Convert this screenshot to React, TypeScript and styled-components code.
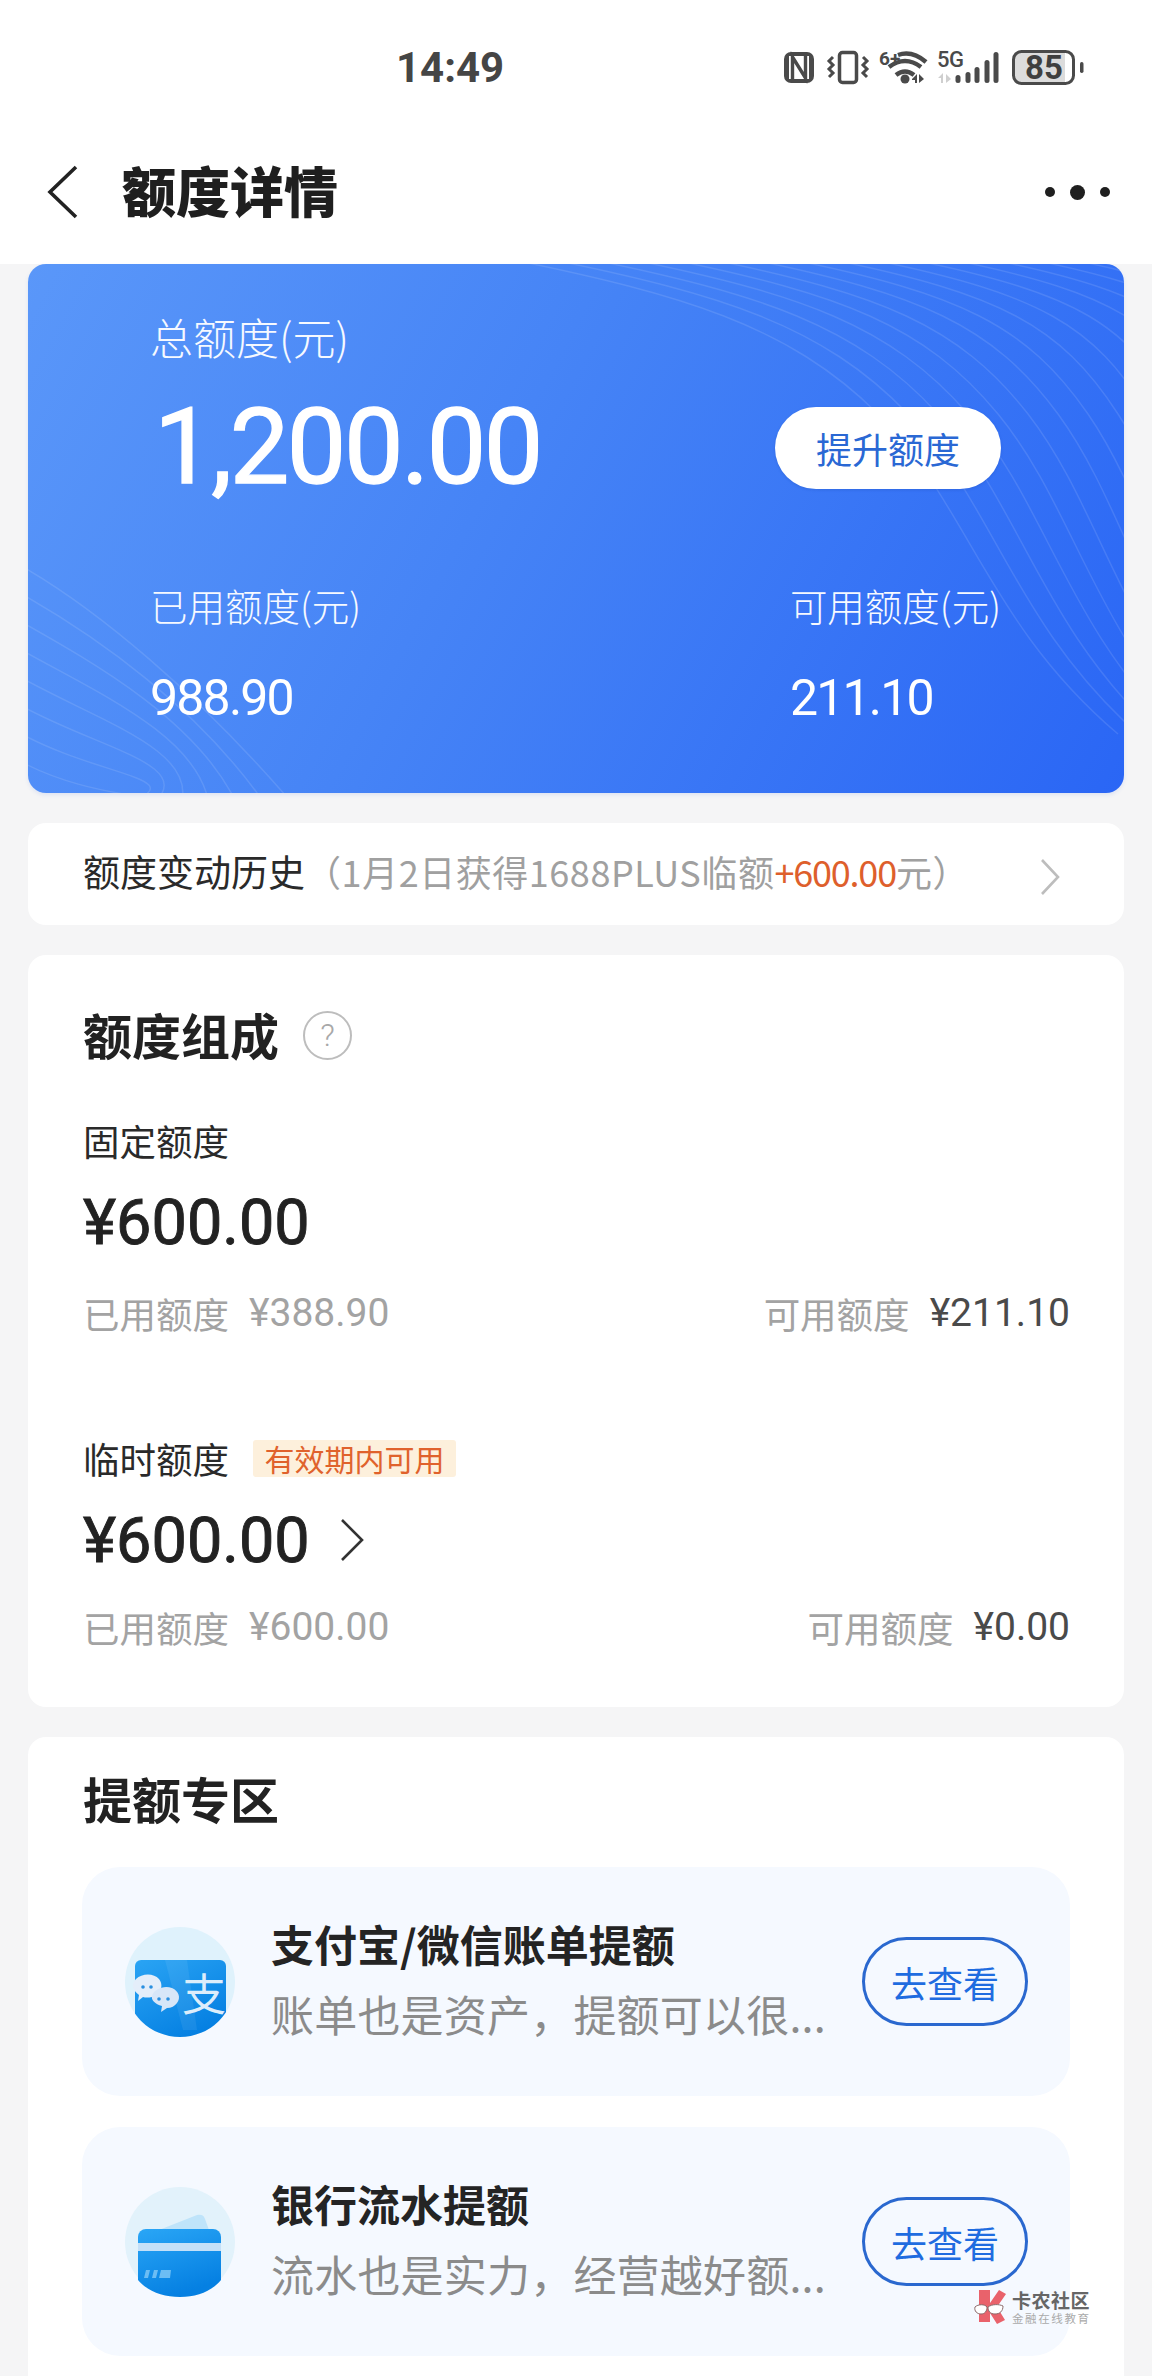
import * as React from "react";
import styled, { createGlobalStyle } from "styled-components";

const GlobalStyle = createGlobalStyle`
    html, body {
        margin: 0;
        padding: 0;
        background: #f5f5f6;
    }
    * {
        box-sizing: border-box;
    }
`;

const CJK = `"Noto Sans CJK SC", "Noto Sans", sans-serif`;
const NUM = `Roboto, "Noto Sans CJK SC", sans-serif`;

const Page = styled.div`
    position: relative;
    width: 1152px;
    height: 2376px;
    overflow: hidden;
    background: #f5f5f6;
    font-family: ${NUM};
`;

const Header = styled.header`
    background: #fff;
    height: 264px;
`;

const StatusBar = styled.div`
    display: flex;
    align-items: center;
    height: 134px;
    padding: 0 67px 0 396px;
`;

const Clock = styled.div`
    font-size: 42px;
    font-weight: 700;
    color: #454545;
`;

const StatusIcons = styled.div`
    margin-left: auto;
    display: flex;
    align-items: center;
`;

const Nav = styled.div`
    display: flex;
    align-items: center;
    height: 116px;
    padding: 0 42px 0 47px;
`;

const NavTitle = styled.h1`
    margin: 0 0 6px 43px;
    font-family: ${CJK};
    font-size: 54px;
    font-weight: 900;
    color: #1f1f1f;
`;

const Dots = styled.div`
    margin-left: auto;
    display: flex;
    align-items: center;
    gap: 15px;
`;

const Dot = styled.span<{ $size: number }>`
    width: ${(p) => p.$size}px;
    height: ${(p) => p.$size}px;
    border-radius: 50%;
    background: #1f1f1f;
`;

const Content = styled.main`
    display: flex;
    flex-direction: column;
    gap: 30px;
    padding: 0 28px;
`;

const Hero = styled.section`
    position: relative;
    height: 529px;
    padding: 44px 123px 0 122px;
    border-radius: 18px;
    overflow: hidden;
    color: #fff;
    background: linear-gradient(118deg, #5a97f9 0%, #4684f6 42%, #2a66f5 100%);
    box-shadow: 0 2px 4px rgba(60, 110, 220, 0.12);
`;

const Waves = styled.svg`
    position: absolute;
    left: 0;
    top: 0;
    pointer-events: none;
`;

const HeroInner = styled.div`
    position: relative;
`;

const HeroLabel = styled.div`
    font-family: ${CJK};
    font-size: 43px;
    line-height: 56px;
    color: #f6f9ff;
    font-weight: 300;
`;

const HeroTop = styled.div`
    display: flex;
    align-items: center;
    justify-content: space-between;
    margin-top: 23px;
    height: 120px;
`;

const HeroAmount = styled.div`
    margin-left: 4px;
    font-size: 106px;
    font-weight: 400;
    letter-spacing: -2.4px;
    line-height: 120px;
    -webkit-text-stroke: 1.4px #fff;
`;

const RaiseButton = styled.div`
    display: flex;
    align-items: center;
    justify-content: center;
    width: 226px;
    height: 82px;
    margin-top: 2px;
    border-radius: 41px;
    background: #fff;
    color: #2a68d4;
    font-family: ${CJK};
    font-size: 36px;
    box-shadow: 0 1px 3px rgba(20, 60, 150, 0.2);
`;

const HeroStats = styled.div`
    display: flex;
    justify-content: space-between;
    margin-top: 75px;
`;

const HeroStat = styled.div`
    display: flex;
    flex-direction: column;
    gap: 49px;
`;

const StatLabel = styled.div`
    font-family: ${CJK};
    font-size: 37.5px;
    line-height: 45px;
    color: #f6f9ff;
    font-weight: 300;
`;

const StatValue = styled.div`
    font-size: 50px;
    line-height: 45px;
    letter-spacing: -1.8px;
`;

const HistoryRow = styled.div`
    display: flex;
    align-items: center;
    height: 102px;
    padding: 0 64px 6px 55px;
    border-radius: 18px;
    background: #fff;
    font-family: ${CJK};
    font-size: 37px;
    color: #2a2a2a;
    white-space: nowrap;
`;

const HistoryNote = styled.span`
    color: #a0a0a0;
    font-size: 36px;
    letter-spacing: 0.55px;
`;

const Plus = styled.span`
    color: #de5f2c;
    letter-spacing: -1.2px;
`;

const Chevron = styled.svg<{ $left?: number; $top?: number }>`
    margin-left: ${(p) => (p.$left === undefined ? "auto" : `${p.$left}px`)};
    margin-top: ${(p) => p.$top ?? 0}px;
    flex: none;
`;

const Card = styled.section`
    padding: 0 54px 0 55px;
    border-radius: 18px;
    background: #fff;
`;

const QuotaCard = styled(Card)`
    height: 752px;
    padding-top: 42px;
`;

const ZoneCard = styled(Card)`
    height: 660px;
    padding-top: 24px;
`;

const CardTitle = styled.h2`
    display: flex;
    align-items: center;
    gap: 24px;
    margin: 0;
    height: 72px;
    font-family: ${CJK};
    font-size: 49px;
    font-weight: 700;
    color: #222;
`;

const HelpIcon = styled.span`
    display: flex;
    align-items: center;
    justify-content: center;
    width: 49px;
    height: 49px;
    margin-top: 4px;
    border: 2.5px solid #bdbdbd;
    border-radius: 50%;
    font-family: ${NUM};
    font-size: 32px;
    font-weight: 300;
    color: #a8a8a8;
`;

const QuotaBlock = styled.div<{ $top: number }>`
    margin-top: ${(p) => p.$top}px;
`;

const QuotaName = styled.div`
    display: flex;
    align-items: center;
    gap: 24px;
    height: 50px;
    font-family: ${CJK};
    font-size: 36.5px;
    color: #2a2a2a;
`;

const Badge = styled.span`
    display: flex;
    align-items: center;
    justify-content: center;
    width: 203px;
    height: 37px;
    background: #fdf0dc;
    color: #e0622c;
    font-size: 30px;
    border-radius: 3px;
`;

const QuotaAmount = styled.div`
    display: flex;
    align-items: center;
    height: 80px;
    margin-top: 17px;
    font-size: 63px;
    font-weight: 400;
    -webkit-text-stroke: 0.9px #222;
    color: #222;
`;

const QuotaStats = styled.div<{ $top: number }>`
    display: flex;
    justify-content: space-between;
    align-items: center;
    height: 50px;
    margin-top: ${(p) => p.$top}px;
    font-family: ${CJK};
    font-size: 36.5px;
    color: #a3a3a3;
`;

const QuotaStat = styled.div`
    display: flex;
    align-items: center;
    gap: 20px;
`;

const StatMoney = styled.span<{ $dark?: boolean }>`
    font-family: ${NUM};
    font-size: 39px;
    line-height: 50px;
    color: ${(p) => (p.$dark ? "#4a4a4a" : "#a3a3a3")};
`;

const Tiles = styled.div`
    display: flex;
    flex-direction: column;
    gap: 31px;
    margin-top: 34px;
    margin-left: -1px;
`;

const Tile = styled.div`
    display: flex;
    align-items: center;
    height: 229px;
    padding: 0 42px 0 43px;
    border-radius: 38px;
    background: #f5f9ff;
`;

const TileText = styled.div`
    flex: 1;
    min-width: 0;
    margin: 0 0 8px 36px;
    font-family: ${CJK};
`;

const TileTitle = styled.div`
    font-size: 43px;
    line-height: 60px;
    font-weight: 700;
    color: #242424;
`;

const TileSub = styled.div`
    margin-top: 10px;
    font-size: 43px;
    line-height: 60px;
    letter-spacing: 0.2px;
    color: #8b8b8b;
    white-space: nowrap;
`;

const LookButton = styled.div`
    flex: none;
    display: flex;
    align-items: center;
    justify-content: center;
    width: 166px;
    height: 89px;
    border: 3px solid #2a68cf;
    border-radius: 45px;
    color: #1f6ce0;
    font-family: ${CJK};
    font-size: 36px;
`;

const Watermark = styled.div`
    position: absolute;
    left: 973px;
    top: 2289px;
    display: flex;
    align-items: center;
    gap: 5px;
`;

const MarkText = styled.div`
    font-family: ${CJK};
`;

const MarkName = styled.div`
    font-size: 19px;
    line-height: 22px;
    font-weight: 700;
    letter-spacing: 0.5px;
    color: #666;
`;

const MarkSlogan = styled.div`
    font-size: 11.5px;
    line-height: 14px;
    letter-spacing: 1.6px;
    color: #aaa;
`;

const StatusCluster = () => (
    <svg width="302" height="40" viewBox="0 0 302 40">
        <rect x="1" y="5" width="30" height="31" rx="7" fill="#4a4a4a" />
        <path d="M6 9h20v23H6z" fill="#fff" />
        <path d="M9.5 32V10L22.5 31V9" fill="none" stroke="#4a4a4a" strokeWidth="3.4" />
        <g fill="none" stroke="#4a4a4a">
            <rect x="56.5" y="5.5" width="17" height="30" rx="3" strokeWidth="3.5" />
            <path d="M50 10l-4 4 4 4-4 4 4 4-4 4M80 10l4 4-4 4 4 4-4 4 4 4" strokeWidth="3" />
            <path d="M115 8Q129 3 143 15" strokeWidth="4.5" />
            <path d="M106 20Q122 8 138 20" strokeWidth="4.5" />
            <path d="M113 28Q122 21 131 28" strokeWidth="4.5" />
        </g>
        <text x="96" y="18" fontSize="19" fontWeight="700" fill="#4a4a4a" fontFamily="Roboto">
            6+
        </text>
        <circle cx="122" cy="32" r="4.5" fill="#4a4a4a" />
        <path d="M129 32l5-5v9h-2v-3h-3zM136 27l5 5-5 4z" fill="#4a4a4a" />
        <text x="154" y="20" fontSize="22" fontWeight="500" fill="#4a4a4a" fontFamily="Roboto" letterSpacing="-0.5">
            5G
        </text>
        <path d="M160 26l-5 5h3v5h2zM163 27l5 5-5 4z" fill="#cfcfcf" />
        <g fill="#4a4a4a">
            <rect x="172.5" y="28" width="5" height="8" rx="2.5" />
            <rect x="182.5" y="25" width="5" height="11" rx="2.5" />
            <rect x="191.5" y="20" width="5" height="16" rx="2.5" />
            <rect x="201.5" y="13" width="5" height="23" rx="2.5" />
            <rect x="210.5" y="5" width="5" height="31" rx="2.5" />
        </g>
        <path d="M232 6h50v29h-50z" fill="#dcdcdc" />
        <rect x="230.5" y="4.5" width="60" height="32" rx="8" fill="none" stroke="#4a4a4a" strokeWidth="3" />
        <rect x="297" y="15" width="3.5" height="11" rx="1.7" fill="#4a4a4a" />
        <text x="261" y="32" textAnchor="middle" fontSize="33" fontWeight="700" fill="#3f3f3f" fontFamily="Roboto">
            85
        </text>
    </svg>
);

const HeroWaves = () => (
    <Waves width="1096" height="529" viewBox="0 0 1096 529" fill="none">
        <g stroke="#fff" strokeOpacity="0.11" strokeWidth="1.5">
            {Array.from({ length: 15 }, (_, i) => (
                <path
                    key={i}
                    d={`M${486 + i * 40} -4 C${650 + i * 40} 30 ${760 + i * 34} 60 ${850 + i * 30} 150 S${960 + i * 26} 360 ${1090 + i * 20} 470`}
                />
            ))}
            {Array.from({ length: 9 }, (_, i) => (
                <path
                    key={i}
                    d={`M-10 ${300 + i * 28} C70 ${345 + i * 28} 170 ${430 + i * 14} ${265 - i * 28} 540`}
                />
            ))}
        </g>
    </Waves>
);

const ChevronIcon = ({
    left,
    top,
    color,
    w,
    h,
}: {
    left?: number;
    top?: number;
    color: string;
    w: number;
    h: number;
}) => (
    <Chevron $left={left} $top={top} width={w} height={h} viewBox={`0 0 ${w} ${h}`} fill="none">
        <path d={`M2 1L${w - 2} ${h / 2}L2 ${h - 1}`} stroke={color} strokeWidth="2.6" />
    </Chevron>
);

const WalletIcon = () => (
    <svg width="110" height="110" viewBox="0 0 110 110" style={{ flex: "none" }}>
        <defs>
            <linearGradient id="walletFill" x1="0" y1="0" x2="0.6" y2="1">
                <stop offset="0" stopColor="#2aa4f4" />
                <stop offset="1" stopColor="#0580e2" />
            </linearGradient>
            <clipPath id="walletClip">
                <circle cx="55" cy="55" r="55" />
            </clipPath>
        </defs>
        <circle cx="55" cy="55" r="55" fill="#dff2fc" />
        <g clipPath="url(#walletClip)">
            <path d="M10 39a6 6 0 0 1 6-6h79a6 6 0 0 1 6 6v71H10z" fill="url(#walletFill)" />
            <path d="M40 33h22l10 70H58z" fill="#fff" fillOpacity="0.07" />
        </g>
        <path d="M11 52c6-6 18-6 23 0 4 5 3 12-3 16-4 3-10 3-13 2l-5 4 1-6C7 63 6 57 11 52z" fill="#e4eefa" />
        <path d="M27 69c2-7 12-11 20-8 7 3 9 10 5 15-2 3-6 5-10 5l-6 4 1-6c-7-2-11-6-10-10z" fill="#d7e6f8" />
        <g fill="#2a8fe0">
            <circle cx="18" cy="60" r="1.8" />
            <circle cx="26" cy="60" r="1.8" />
            <circle cx="34" cy="72" r="1.8" />
            <circle cx="43" cy="72" r="1.8" />
        </g>
        <text x="79" y="84" textAnchor="middle" fontSize="44" fill="#dcedfb" fontFamily={CJK}>
            支
        </text>
    </svg>
);

const BankIcon = () => (
    <svg width="110" height="110" viewBox="0 0 110 110" style={{ flex: "none" }}>
        <defs>
            <linearGradient id="bankFill" x1="0" y1="0" x2="0.4" y2="1">
                <stop offset="0" stopColor="#2aa6f6" />
                <stop offset="1" stopColor="#0580e2" />
            </linearGradient>
        </defs>
        <circle cx="55" cy="55" r="55" fill="#e2f2fb" />
        <path d="M34 43L72 28c4-1 7 0 8 4l4 11z" fill="#bfe4fa" />
        <path
            d="M13 50a8 8 0 0 1 8-8h67a8 8 0 0 1 8 8v43c-9 11-24 17-41 17s-33-6-42-17z"
            fill="url(#bankFill)"
        />
        <rect x="13" y="56" width="83" height="8" fill="#c4e0f8" />
        <path d="M21 83h4l-2 8h-4zM29 83h4l-2 8h-4zM36 83h10l-1 8H34z" fill="#6cbdf4" />
    </svg>
);

const MarkLogo = () => (
    <svg width="34" height="36" viewBox="0 0 34 36">
        <path d="M6 1h11v13L26 1l7 4-9 13 8 13-8 4-7-11v9H6z" fill="#e9626b" />
        <path
            d="M2 18c3-3 10-3 12 0 0 4-2 7-6 7s-7-3-6-7zM15 18c4-3 11-3 15-1 0 5-3 8-8 8s-7-3-7-7z"
            fill="#fff"
            stroke="#8a6a6a"
            strokeWidth="1"
        />
    </svg>
);

type TileProps = {
    icon: React.ReactNode;
    title: string;
    sub: string;
};

const ZoneTile = ({ icon, title, sub }: TileProps) => (
    <Tile>
        {icon}
        <TileText>
            <TileTitle>{title}</TileTitle>
            <TileSub>{sub}</TileSub>
        </TileText>
        <LookButton>去查看</LookButton>
    </Tile>
);

export default function App() {
    return (
        <Page>
            <GlobalStyle />
            <Header>
                <StatusBar>
                    <Clock>14:49</Clock>
                    <StatusIcons>
                        <StatusCluster />
                    </StatusIcons>
                </StatusBar>
                <Nav>
                    <svg width="32" height="54" viewBox="0 0 32 54" fill="none">
                        <path d="M29 2L3 27L29 52" stroke="#222" strokeWidth="3.6" />
                    </svg>
                    <NavTitle>额度详情</NavTitle>
                    <Dots>
                        <Dot $size={10} />
                        <Dot $size={15} />
                        <Dot $size={10} />
                    </Dots>
                </Nav>
            </Header>
            <Content>
                <Hero>
                    <HeroWaves />
                    <HeroInner>
                        <HeroLabel>总额度(元)</HeroLabel>
                        <HeroTop>
                            <HeroAmount>1,200.00</HeroAmount>
                            <RaiseButton>提升额度</RaiseButton>
                        </HeroTop>
                        <HeroStats>
                            <HeroStat>
                                <StatLabel>已用额度(元)</StatLabel>
                                <StatValue>988.90</StatValue>
                            </HeroStat>
                            <HeroStat>
                                <StatLabel>可用额度(元)</StatLabel>
                                <StatValue>211.10</StatValue>
                            </HeroStat>
                        </HeroStats>
                    </HeroInner>
                </Hero>
                <HistoryRow>
                    额度变动历史
                    <HistoryNote>
                        （1月2日获得1688PLUS临额<Plus>+600.00</Plus>元）
                    </HistoryNote>
                    <ChevronIcon top={12} color="#bdbdbd" w={20} h={36} />
                </HistoryRow>
                <QuotaCard>
                    <CardTitle>
                        额度组成
                        <HelpIcon>?</HelpIcon>
                    </CardTitle>
                    <QuotaBlock $top={46}>
                        <QuotaName>固定额度</QuotaName>
                        <QuotaAmount>¥600.00</QuotaAmount>
                        <QuotaStats $top={26}>
                            <QuotaStat>
                                已用额度<StatMoney>¥388.90</StatMoney>
                            </QuotaStat>
                            <QuotaStat>
                                可用额度<StatMoney $dark>¥211.10</StatMoney>
                            </QuotaStat>
                        </QuotaStats>
                    </QuotaBlock>
                    <QuotaBlock $top={95}>
                        <QuotaName>
                            临时额度<Badge>有效期内可用</Badge>
                        </QuotaName>
                        <QuotaAmount>
                            ¥600.00
                            <ChevronIcon left={30} color="#333" w={24} h={42} />
                        </QuotaAmount>
                        <QuotaStats $top={22}>
                            <QuotaStat>
                                已用额度<StatMoney>¥600.00</StatMoney>
                            </QuotaStat>
                            <QuotaStat>
                                可用额度<StatMoney $dark>¥0.00</StatMoney>
                            </QuotaStat>
                        </QuotaStats>
                    </QuotaBlock>
                </QuotaCard>
                <ZoneCard>
                    <CardTitle>提额专区</CardTitle>
                    <Tiles>
                        <ZoneTile
                            icon={<WalletIcon />}
                            title="支付宝/微信账单提额"
                            sub="账单也是资产，提额可以很..."
                        />
                        <ZoneTile
                            icon={<BankIcon />}
                            title="银行流水提额"
                            sub="流水也是实力，经营越好额..."
                        />
                    </Tiles>
                </ZoneCard>
            </Content>
            <Watermark>
                <MarkLogo />
                <MarkText>
                    <MarkName>卡农社区</MarkName>
                    <MarkSlogan>金融在线教育</MarkSlogan>
                </MarkText>
            </Watermark>
        </Page>
    );
}
